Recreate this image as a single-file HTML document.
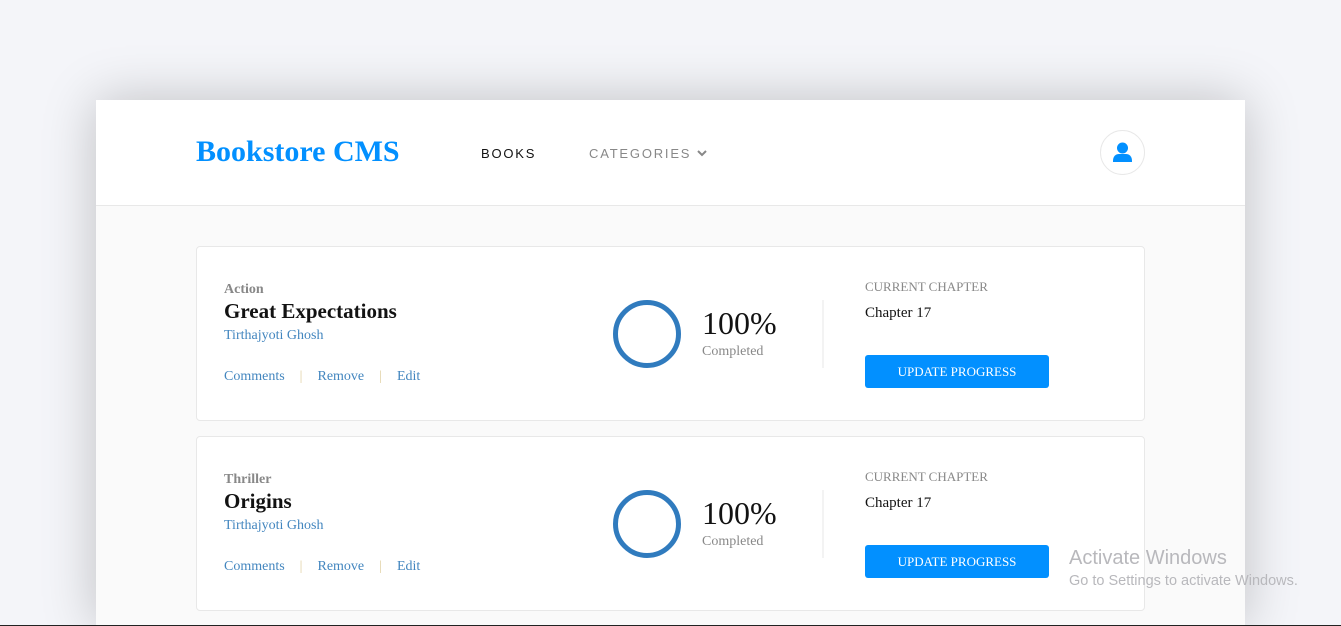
<!DOCTYPE html>
<html><head><style>
*{margin:0;padding:0;box-sizing:border-box}
body{width:1341px;height:626px;overflow:hidden;background:#f4f5f9;font-family:"Liberation Serif",serif;position:relative}
.panel{position:absolute;left:96px;top:100px;width:1149px;height:526px;background:#fafafa;box-shadow:0 0 50px rgba(0,0,0,0.22)}
.hdr{height:106px;background:#fff;border-bottom:1px solid #e8e8e8;position:relative}
.logo{position:absolute;left:100px;top:35px;font-size:30px;font-weight:bold;color:#0290ff}
.nav{position:absolute;top:46px;font-family:"Liberation Sans",sans-serif;font-size:13px;letter-spacing:1.8px}
.user{position:absolute;left:1004px;top:30px;width:45px;height:45px;border:1px solid #e8e8e8;border-radius:50%}
.card{position:absolute;left:100px;width:949px;height:175px;background:#fff;border:1px solid #e8e8e8;border-radius:4px}
.cat{position:absolute;left:27px;top:35px;font-size:14px;font-weight:bold;color:#888}
.title{position:absolute;left:27px;top:52px;font-size:21px;font-weight:bold;color:#121212}
.auth{position:absolute;left:27px;top:81px;font-size:14px;color:#4386bf}
.links{position:absolute;left:27px;top:122px;font-size:14px;color:#4386bf}
.links i{font-style:normal;color:#e0d0a0;margin:0 15px}
.ring{position:absolute;left:416px;top:53px;width:68px;height:68px;border:5px solid #307bbe;border-radius:50%}
.pct{position:absolute;left:505px;top:58px;font-size:32px;color:#121212}
.comp{position:absolute;left:505px;top:97px;font-size:14px;color:#888}
.div{position:absolute;left:625px;top:53px;width:2px;height:68px;background:#f3f3f3}
.cc{position:absolute;left:668px;top:32px;font-size:13px;color:#888}
.ch{position:absolute;left:668px;top:58px;font-size:15px;color:#121212}
.btn{position:absolute;left:668px;top:108px;width:184px;height:33px;background:#0290ff;border-radius:3px;color:#fff;font-size:13px;text-align:center;line-height:33px}
.wm{position:absolute;left:1069px;font-family:"Liberation Sans",sans-serif;color:#b8b8bc}
</style></head><body>
<div class="panel">
 <div class="hdr">
  <div class="logo">Bookstore CMS</div>
  <div class="nav" style="left:385px;color:#121212">BOOKS</div>
  <div class="nav" style="left:493px;color:#888">CATEGORIES <svg width="10" height="8" viewBox="0 0 10 8" style="vertical-align:1px"><path d="M1 2l4 4 4-4" stroke="#888" stroke-width="2" fill="none"/></svg></div>
  <div class="user"><svg width="45" height="45" viewBox="0 0 45 45" style="position:absolute;left:-1px;top:-1px"><circle cx="22.5" cy="18" r="5.5" fill="#0290ff"/><path d="M13 31c0-5 3-7 6-7h7c3 0 6 2 6 7v1H13z" fill="#0290ff"/></svg></div>
 </div>
 <div class="card" style="top:146px">
  <div class="cat">Action</div><div class="title">Great Expectations</div><div class="auth">Tirthajyoti Ghosh</div>
  <div class="links">Comments<i>|</i>Remove<i>|</i>Edit</div>
  <div class="ring"></div><div class="pct">100%</div><div class="comp">Completed</div><div class="div"></div>
  <div class="cc">CURRENT CHAPTER</div><div class="ch">Chapter 17</div><div class="btn">UPDATE PROGRESS</div>
 </div>
 <div class="card" style="top:336px">
  <div class="cat">Thriller</div><div class="title">Origins</div><div class="auth">Tirthajyoti Ghosh</div>
  <div class="links">Comments<i>|</i>Remove<i>|</i>Edit</div>
  <div class="ring"></div><div class="pct">100%</div><div class="comp">Completed</div><div class="div"></div>
  <div class="cc">CURRENT CHAPTER</div><div class="ch">Chapter 17</div><div class="btn">UPDATE PROGRESS</div>
 </div>
</div>
<div class="wm" style="top:547px;font-size:20px">Activate Windows</div>
<div class="wm" style="top:573px;font-size:14.5px">Go to Settings to activate Windows.</div>
<div style="position:absolute;left:0;top:625px;width:1341px;height:1px;background:#222"></div>
</body></html>
